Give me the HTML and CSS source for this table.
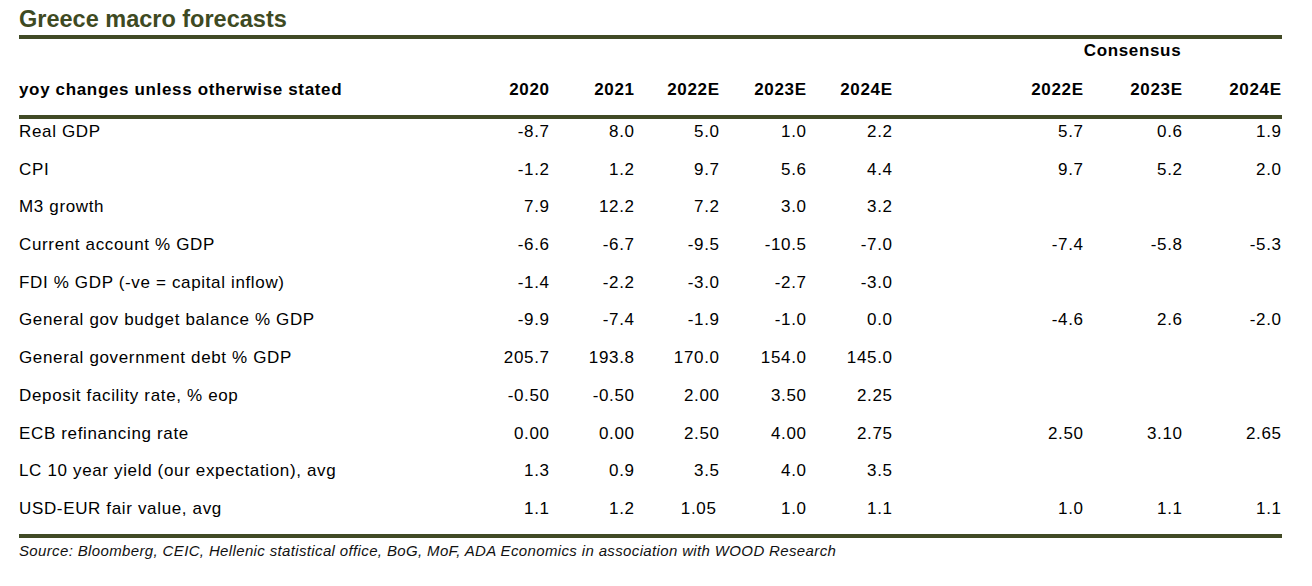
FILE: index.html
```html
<!DOCTYPE html>
<html>
<head>
<meta charset="utf-8">
<link rel="stylesheet" href="styles.css">
</head>
<body>
<div class="page">
  <h1 class="title">Greece macro forecasts</h1>
  <div class="rule"></div>
  <div class="table">
    <div class="row head-top">
      <div class="label"></div>
      <div class="num"></div><div class="num"></div><div class="num"></div><div class="num"></div><div class="num"></div>
      <div class="spacer"></div>
      <div class="consensus">Consensus</div>
    </div>
    <div class="row head">
      <div class="label">yoy changes unless otherwise stated</div>
      <div class="num">2020</div><div class="num">2021</div><div class="num">2022E</div><div class="num">2023E</div><div class="num">2024E</div>
      <div class="spacer"></div>
      <div class="num">2022E</div><div class="num">2023E</div><div class="num">2024E</div>
    </div>
  </div>
  <div class="rule"></div>
  <div class="table body">
    <div class="row"><div class="label">Real GDP</div><div class="num">-8.7</div><div class="num">8.0</div><div class="num">5.0</div><div class="num">1.0</div><div class="num">2.2</div><div class="spacer"></div><div class="num">5.7</div><div class="num">0.6</div><div class="num">1.9</div></div>
    <div class="row"><div class="label">CPI</div><div class="num">-1.2</div><div class="num">1.2</div><div class="num">9.7</div><div class="num">5.6</div><div class="num">4.4</div><div class="spacer"></div><div class="num">9.7</div><div class="num">5.2</div><div class="num">2.0</div></div>
    <div class="row"><div class="label">M3 growth</div><div class="num">7.9</div><div class="num">12.2</div><div class="num">7.2</div><div class="num">3.0</div><div class="num">3.2</div><div class="spacer"></div><div class="num"></div><div class="num"></div><div class="num"></div></div>
    <div class="row"><div class="label">Current account % GDP</div><div class="num">-6.6</div><div class="num">-6.7</div><div class="num">-9.5</div><div class="num">-10.5</div><div class="num">-7.0</div><div class="spacer"></div><div class="num">-7.4</div><div class="num">-5.8</div><div class="num">-5.3</div></div>
    <div class="row"><div class="label">FDI % GDP (-ve = capital inflow)</div><div class="num">-1.4</div><div class="num">-2.2</div><div class="num">-3.0</div><div class="num">-2.7</div><div class="num">-3.0</div><div class="spacer"></div><div class="num"></div><div class="num"></div><div class="num"></div></div>
    <div class="row"><div class="label">General gov budget balance % GDP</div><div class="num">-9.9</div><div class="num">-7.4</div><div class="num">-1.9</div><div class="num">-1.0</div><div class="num">0.0</div><div class="spacer"></div><div class="num">-4.6</div><div class="num">2.6</div><div class="num">-2.0</div></div>
    <div class="row"><div class="label">General government debt % GDP</div><div class="num">205.7</div><div class="num">193.8</div><div class="num">170.0</div><div class="num">154.0</div><div class="num">145.0</div><div class="spacer"></div><div class="num"></div><div class="num"></div><div class="num"></div></div>
    <div class="row"><div class="label">Deposit facility rate, % eop</div><div class="num">-0.50</div><div class="num">-0.50</div><div class="num">2.00</div><div class="num">3.50</div><div class="num">2.25</div><div class="spacer"></div><div class="num"></div><div class="num"></div><div class="num"></div></div>
    <div class="row"><div class="label">ECB refinancing rate</div><div class="num">0.00</div><div class="num">0.00</div><div class="num">2.50</div><div class="num">4.00</div><div class="num">2.75</div><div class="spacer"></div><div class="num">2.50</div><div class="num">3.10</div><div class="num">2.65</div></div>
    <div class="row"><div class="label">LC 10 year yield (our expectation), avg</div><div class="num">1.3</div><div class="num">0.9</div><div class="num">3.5</div><div class="num">4.0</div><div class="num">3.5</div><div class="spacer"></div><div class="num"></div><div class="num"></div><div class="num"></div></div>
    <div class="row"><div class="label">USD-EUR fair value, avg</div><div class="num">1.1</div><div class="num">1.2</div><div class="num shift">1.05</div><div class="num">1.0</div><div class="num">1.1</div><div class="spacer"></div><div class="num">1.0</div><div class="num">1.1</div><div class="num">1.1</div></div>
  </div>
  <div class="rule"></div>
  <p class="source">Source: Bloomberg, CEIC, Hellenic statistical office, BoG, MoF, ADA Economics in association with WOOD Research</p>
</div>
</body>
</html>
```
FILE: styles.css
```css
html, body {
  margin: 0;
  padding: 0;
  background: #ffffff;
}
body {
  font-family: "Liberation Sans", Arial, sans-serif;
  color: #000000;
}
.page {
  width: 1263px;
  margin-left: 19px;
  padding-top: 6px;
}
.title {
  margin: 0;
  font-size: 23.5px;
  font-weight: bold;
  line-height: 26px;
  color: #3e4a22;
  height: 29px;
}
.rule {
  height: 4px;
  background: #414a25;
}
.table {
  display: flex;
  flex-direction: column;
}
.row {
  display: grid;
  grid-template-columns: 445px 85px 85px 85px 87px 86px 92px 99px 99px 99px;
  font-size: 17px;
  letter-spacing: 0.65px;
  line-height: 20px;
}
.head-top {
  height: 39px;
  padding-top: 2px;
  box-sizing: border-box;
}
.head {
  height: 37px;
  padding-top: 2px;
  font-weight: bold;
  box-sizing: border-box;
}
.consensus {
  grid-column: 8 / 11;
  text-align: center;
  font-weight: bold;
}
.body .row {
  height: 37.7px;
  padding-top: 3px;
  box-sizing: border-box;
}
.num {
  text-align: right;
  margin-right: -0.65px;
}
.num.shift {
  margin-right: 0;
  padding-right: 2.5px;
}
.source {
  margin: 0;
  padding-top: 4px;
  font-size: 15px;
  letter-spacing: 0.36px;
  line-height: 18px;
  font-style: italic;
  color: #111111;
}
```
